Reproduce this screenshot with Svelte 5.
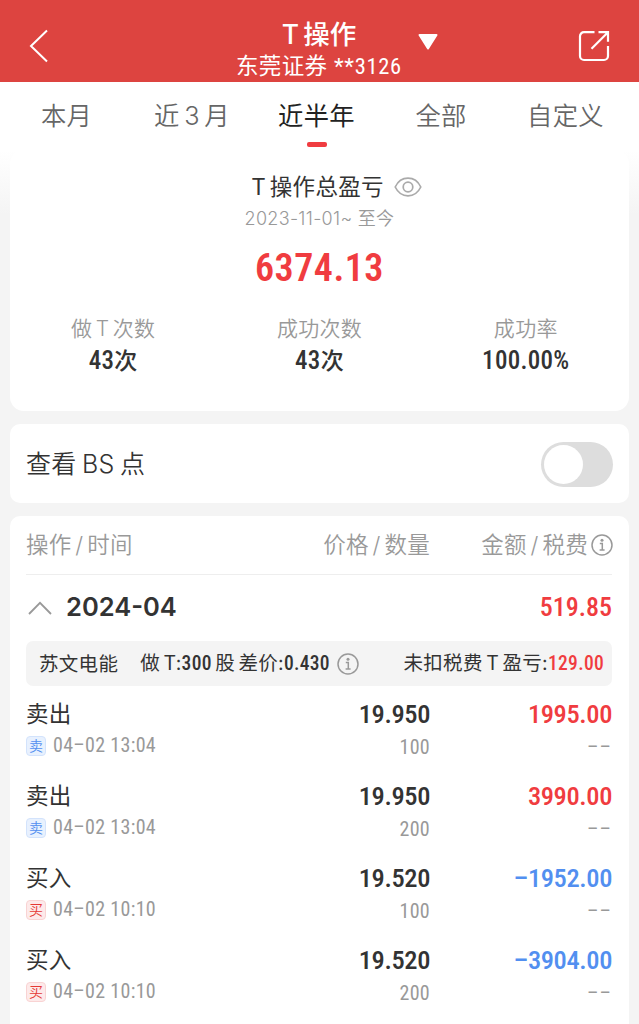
<script lang="ts">
  interface Trade {
    side: "sell" | "buy";
    time: string;
    price: string;
    qty: string;
    amount: string;
    fee: string;
  }

  const tabs = ["本月", "近 3 月", "近半年", "全部", "自定义"];
  let activeTab = $state(2);
  let showPoints = $state(false);
  let open = $state(true);

  const stats = [
    {label: "做 T 次数", value: "43", unit: "次"},
    {label: "成功次数", value: "43", unit: "次"},
    {label: "成功率", value: "100.00%", unit: ""},
  ];

  const trades: Trade[] = [
    {side: "sell", time: "04–02 13:04", price: "19.950", qty: "100", amount: "1995.00", fee: "––"},
    {side: "sell", time: "04–02 13:04", price: "19.950", qty: "200", amount: "3990.00", fee: "––"},
    {side: "buy", time: "04–02 10:10", price: "19.520", qty: "100", amount: "–1952.00", fee: "––"},
    {side: "buy", time: "04–02 10:10", price: "19.520", qty: "200", amount: "–3904.00", fee: "––"},
  ];
</script>

{#snippet info()}
  <svg class="info" width="22" height="22" viewBox="0 0 22 22" fill="none" stroke="currentColor" stroke-width="1.5">
    <circle cx="11" cy="11" r="10" />
    <circle cx="11" cy="6.3" r="1.5" fill="currentColor" stroke="none" />
    <path d="M8.8 9.6h2.5v6M8.6 15.9h5" />
  </svg>
{/snippet}

<div class="page">
  <header class="topbar">
    <button class="back" aria-label="返回">
      <svg width="20" height="34" viewBox="0 0 20 34" fill="none" stroke="#fff" stroke-width="2">
        <path d="M18 1.5 2 17l16 15.5" />
      </svg>
    </button>
    <div class="heading">
      <h1>T 操作</h1>
      <div class="account">东莞证券 <span class="num">**3126</span></div>
    </div>
    <svg class="caret" width="22" height="18" viewBox="0 0 22 18">
      <path d="M2.5 2h17L11 15.5z" fill="#fff" stroke="#fff" stroke-width="2" stroke-linejoin="round" />
    </svg>
    <button class="share" aria-label="分享">
      <svg width="32" height="32" viewBox="0 0 32 32" fill="none" stroke="#fff" stroke-width="2.2">
        <path d="M16.5 2.2H6a4 4 0 0 0-4 4V26a4 4 0 0 0 4 4h20a4 4 0 0 0 4-4V16" />
        <path d="M20.5 2.2H30v9.5M29.5 2.7 13.5 18.7" />
      </svg>
    </button>
  </header>

  <nav class="tabs">
    {#each tabs as tab, i}
      <button class="tab" class:active={i === activeTab} onclick={() => (activeTab = i)}>{tab}</button>
    {/each}
  </nav>

  <section class="card summary">
    <div class="title">
      <span>T 操作总盈亏</span>
      <svg width="28" height="20" viewBox="0 0 28 20" fill="none" stroke="#aaa" stroke-width="1.7">
        <path d="M1.2 10C3.8 4.6 8.5 1.2 14 1.2S24.2 4.6 26.8 10C24.2 15.4 19.5 18.8 14 18.8S3.8 15.4 1.2 10z" />
        <circle cx="14" cy="10" r="4.8" />
      </svg>
    </div>
    <div class="range">2023-11-01~ 至今</div>
    <div class="total"><span class="num">6374.13</span></div>
    <div class="stats">
      {#each stats as stat}
        <div class="stat">
          <div class="label">{stat.label}</div>
          <div class="value"><span class="num">{stat.value}</span>{stat.unit}</div>
        </div>
      {/each}
    </div>
  </section>

  <section class="card points">
    <span>查看 BS 点</span>
    <button
      class="switch"
      class:on={showPoints}
      role="switch"
      aria-checked={showPoints}
      aria-label="查看 BS 点"
      onclick={() => (showPoints = !showPoints)}
    ><i></i></button>
  </section>

  <section class="card list">
    <div class="grid columns">
      <span>操作 / 时间</span>
      <span>价格 / 数量</span>
      <span class="with-info">金额 / 税费{@render info()}</span>
    </div>

    <button class="month" onclick={() => (open = !open)}>
      <svg class:closed={!open} width="24" height="14" viewBox="0 0 24 14" fill="none" stroke="#999" stroke-width="1.8">
        <path d="M1 13 12 1.8 23 13" />
      </svg>
      <strong>2024-04</strong>
      <span class="num up">519.85</span>
    </button>

    {#if open}
      <div class="stock">
        <span class="name">苏文电能</span>
        <span class="deal">做 T:<span class="num">300</span> 股 差价:<span class="num">0.430</span></span>
        {@render info()}
        <span class="gross">未扣税费 T 盈亏:<span class="num up">129.00</span></span>
      </div>

      {#each trades as trade}
        <div class="grid trade">
          <div>
            <div class="side">{trade.side === "sell" ? "卖出" : "买入"}</div>
            <div class="when">
              <span class="badge {trade.side}">{trade.side === "sell" ? "卖" : "买"}</span>
              <span class="num">{trade.time}</span>
            </div>
          </div>
          <div>
            <div class="main num">{trade.price}</div>
            <div class="sub num">{trade.qty}</div>
          </div>
          <div>
            <div class="main num {trade.side === 'sell' ? 'up' : 'down'}">{trade.amount}</div>
            <div class="sub num fee">{trade.fee}</div>
          </div>
        </div>
      {/each}
    {/if}
  </section>
</div>

<style>
  :global(body) {
    margin: 0;
    overflow: hidden;
  }
  .page {
    height: 1024px;
    overflow: hidden;
    background: linear-gradient(#fff 150px, #f4f4f4 215px);
    color: #333;
    font-family: Inter, "Noto Sans CJK SC", sans-serif;
    font-weight: 350;
    letter-spacing: 0.3px;
    word-spacing: -0.18em;
  }
  button {
    padding: 0;
    border: 0;
    background: none;
    color: inherit;
    font: inherit;
    letter-spacing: inherit;
    word-spacing: inherit;
  }
  .num {
    font-family: Roboto, "Noto Sans CJK SC", sans-serif;
    font-stretch: 87%;
    font-weight: 500;
    white-space: pre;
    word-spacing: 0;
  }
  .up { color: #f03c40; }
  .down { color: #528ff0; }

  .topbar {
    display: grid;
    grid-template-columns: 236px 166px 1fr auto;
    align-items: center;
    height: 82px;
    padding-right: 29px;
    background: #dd4440;
    color: #fff;
  }
  .back { margin-left: 29px; margin-top: 9px; justify-self: start; }
  .back svg, .share svg { display: block; }
  .share { margin-top: 9px; }
  .caret { margin: 2px 0 0 15px; }
  .heading {
    display: flex;
    flex-direction: column;
    align-items: center;
    padding-top: 14px;
  }
  h1 {
    margin: 0;
    font-size: 26.5px;
    font-weight: 500;
    line-height: 36px;
    letter-spacing: 0;
    word-spacing: -3px;
  }
  .account {
    font-size: 22.5px;
    font-weight: 400;
    line-height: 28px;
    white-space: nowrap;
    word-spacing: 0;
  }
  .account .num { font-weight: 450; letter-spacing: 0.7px; }

  .tabs {
    display: grid;
    grid-template-columns: 133px 118px 131px 118px 131px;
    height: 68px;
    font-size: 25.3px;
    color: #666;
  }
  .tab {
    display: flex;
    flex-direction: column;
    align-items: center;
    line-height: 68px;
    white-space: nowrap;
  }
  .tab.active { color: #222; font-weight: 400; }
  .tab.active::after {
    content: "";
    width: 20px;
    height: 5px;
    margin-top: -8px;
    border-radius: 2px;
    background: #f03c40;
  }

  .card {
    margin: 0 10px 13px;
    border-radius: 14px;
    background: #fff;
  }
  .summary {
    height: 261px;
    text-align: center;
  }
  .title {
    display: flex;
    align-items: center;
    justify-content: center;
    gap: 10px;
    padding: 20px 0 0 34px;
    font-size: 22.5px;
    font-weight: 400;
    line-height: 34px;
  }
  .range {
    font-size: 18px;
    line-height: 29px;
    color: #999;
    word-spacing: 0;
  }
  .total {
    margin-top: 11px;
    font-size: 38px;
    line-height: 46px;
    color: #f03c40;
  }
  .total .num { font-weight: 600; letter-spacing: 0.5px; }
  .stats {
    display: grid;
    grid-template-columns: repeat(3, 1fr);
    margin-top: 22px;
  }
  .label { font-size: 21px; line-height: 32px; color: #999; }
  .value { font-size: 23px; font-weight: 500; line-height: 32px; }
  .value .num { font-size: 25px; }

  .points {
    display: flex;
    align-items: center;
    justify-content: space-between;
    height: 79px;
    padding: 0 16px 4px 16px;
    border-radius: 10px;
    box-sizing: border-box;
    font-size: 25px;
    word-spacing: -0.08em;
  }
  .switch {
    width: 72px;
    height: 45px;
    margin-top: 5px;
    padding: 3px;
    border-radius: 23px;
    background: #ddd;
  }
  .switch i {
    display: block;
    width: 39px;
    height: 39px;
    border-radius: 50%;
    background: #fff;
  }
  .switch.on { background: #f03c40; }
  .switch.on i { margin-left: 27px; }

  .list {
    height: 540px;
    padding: 0 17px 0 16px;
    border-radius: 10px;
  }
  .grid {
    display: grid;
    grid-template-columns: 200px 204px 1fr;
  }
  .grid > :nth-child(n + 2) { text-align: right; }
  .columns {
    height: 58px;
    border-bottom: 1px solid #eee;
    font-size: 22.5px;
    line-height: 58px;
    color: #999;
    white-space: nowrap;
  }
  .with-info {
    display: flex;
    align-items: center;
    justify-content: flex-end;
    gap: 3px;
    margin-right: -1px;
  }
  .info { color: #999; }
  .month {
    display: flex;
    align-items: center;
    width: 100%;
    height: 66px;
    padding: 0 0 3px 2px;
  }
  .month svg { margin-top: 2px; }
  .month strong {
    margin-left: 14px;
    font-size: 25.5px;
    font-weight: 600;
    letter-spacing: 0;
  }
  .month .num {
    margin-left: auto;
    font-size: 26px;
    letter-spacing: 0;
  }
  .closed { transform: rotate(180deg); }

  .stock {
    display: flex;
    align-items: center;
    height: 45px;
    padding: 0 8px 0 13px;
    border-radius: 7px;
    background: #f4f4f4;
    font-size: 19.5px;
    font-weight: 400;
    line-height: 28px;
    white-space: nowrap;
    word-spacing: -0.12em;
  }
  .deal { margin: 0 7px 0 22px; }
  .gross { margin-left: auto; }

  .trade { height: 82px; }
  .side {
    padding-top: 10px;
    font-size: 22.5px;
    font-weight: 400;
    line-height: 36px;
  }
  .when {
    display: flex;
    align-items: center;
    gap: 7px;
    font-size: 20px;
    line-height: 27px;
    color: #999;
  }
  .when .num, .sub { font-weight: 400; }
  .badge {
    width: 18px;
    height: 18px;
    border: 1px solid;
    border-radius: 4px;
    font-size: 14px;
    line-height: 17px;
    letter-spacing: 0;
    text-align: center;
  }
  .badge.sell { border-color: #d3e3fc; background: #e8f1fe; color: #528ff0; }
  .badge.buy { border-color: #f9d3d3; background: #fdeaea; color: #e53935; }
  .main {
    padding-top: 11px;
    font-size: 26.5px;
    line-height: 34px;
    letter-spacing: -0.4px;
  }
  .sub {
    font-size: 20px;
    line-height: 32px;
    color: #999;
  }
  .fee { letter-spacing: 1px; }
</style>
